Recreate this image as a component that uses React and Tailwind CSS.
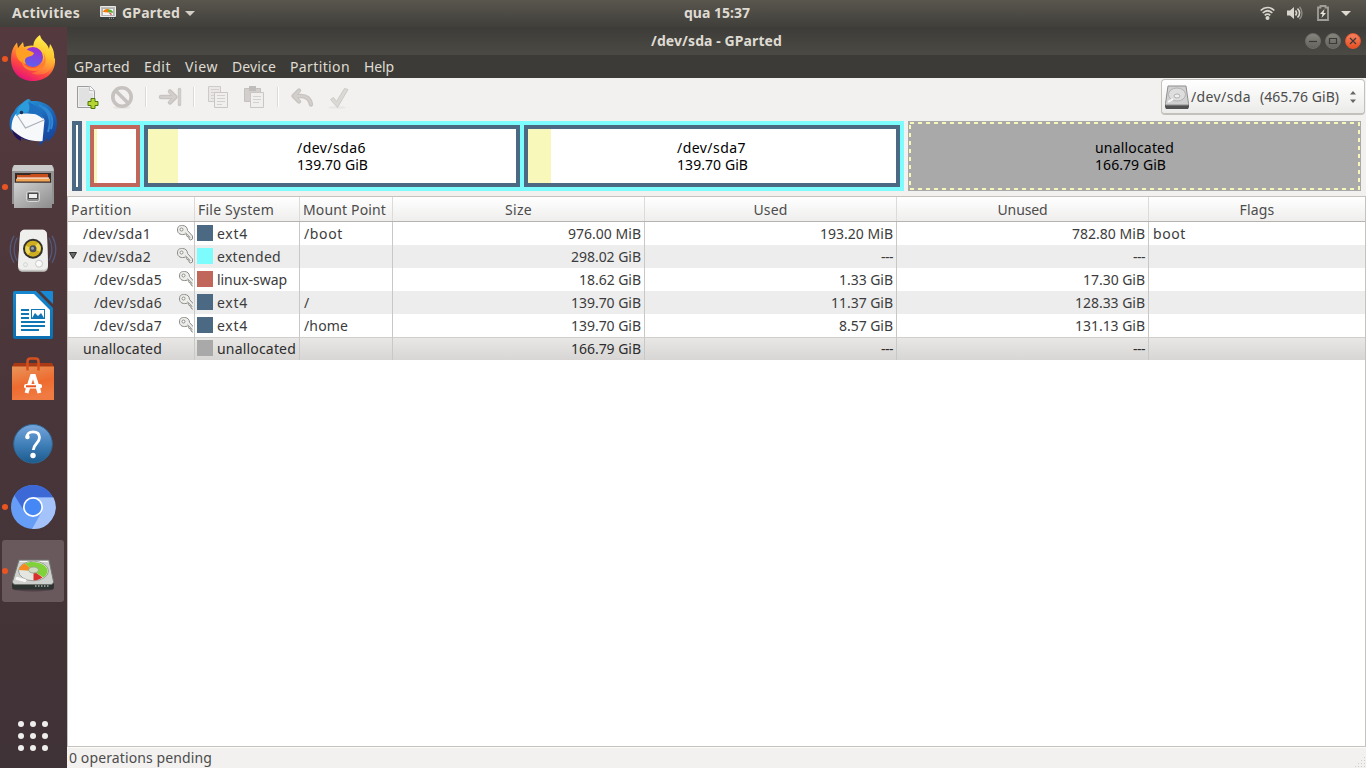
import { useLayoutEffect, useRef } from "react";

// Spreads its text evenly over a given number of pixels.
function Label({ w, className = "", children }) {
  const ref = useRef(null);
  useLayoutEffect(() => {
    const el = ref.current;
    el.style.letterSpacing = "0px";
    const natural = el.getBoundingClientRect().width;
    el.style.letterSpacing = (w - natural) / el.textContent.length + "px";
  }, [w, children]);
  return (
    <span ref={ref} className={"inline-block whitespace-pre " + className}>
      {children}
    </span>
  );
}

function Svg({ className, box, children }) {
  return (
    <svg viewBox={box} className={"block shrink-0 " + className} fill="none">
      {children}
    </svg>
  );
}

function Firefox() {
  return (
    <>
      <defs>
        <linearGradient id="ff1" x1="0.8" y1="0.1" x2="0.3" y2="0.98">
          <stop offset="0" stopColor="#fff44f" />
          <stop offset="0.3" stopColor="#ffa72b" />
          <stop offset="0.65" stopColor="#ff4b3e" />
          <stop offset="1" stopColor="#e5127a" />
        </linearGradient>
        <linearGradient id="ff2" x1="0.6" y1="0" x2="0.4" y2="1">
          <stop offset="0" stopColor="#fff44f" />
          <stop offset="0.5" stopColor="#ffc52f" />
          <stop offset="1" stopColor="#ff6a3c" />
        </linearGradient>
        <linearGradient id="ff3" x1="0.7" y1="0" x2="0.4" y2="1">
          <stop offset="0" stopColor="#a32bd0" />
          <stop offset="1" stopColor="#5a62f0" />
        </linearGradient>
      </defs>
      <path d="M9 31c0-7 2-12 6-16.500l1 5.500 5-6 1 5c5-2 10-2 15 0l11 4 5 8c1 12-8 22-22 22S9 43 9 31Z" fill="url(#ff1)" />
      <path d="M38 7c-5 3.500-7 8-6.500 12 5 1 9 5 10 11 1 9-5 14-12 15 10 4 20 0 22-11 2-8-.5-14-3.500-18l-1 5c-1-6-8-8-9-14Z" fill="url(#ff2)" />
      <circle cx="31" cy="29" r="10" fill="url(#ff3)" />
      <path d="M14 22c2-3 7-3 10-1 3 2 5 2 8 4-1 4-6 3-8 5-2 2-1 4 0 6-6-1-11-7-10-14Z" fill="#ffa024" />
      <path d="M20 32c3 9 13 10 19 5 4-4 4-8 2-13 5 8 3 18-8 19-9 0-14-5-13-11Z" fill="#ff7f30" />
    </>
  );
}

function Thunderbird() {
  return (
    <>
      <defs>
        <linearGradient id="tb1" x1="0.3" y1="0" x2="0.7" y2="1">
          <stop offset="0" stopColor="#2490d6" />
          <stop offset="0.55" stopColor="#1b58ae" />
          <stop offset="1" stopColor="#16439a" />
        </linearGradient>
      </defs>
      <path d="M12 20C15 13 22 9 29 9c14-1 25 7 26 21 0 10-4 16-10 20l1-4-9 8 1-6C24 50 11 45 8 36c-1-6 0-12 4-16Z" fill="url(#tb1)" />
      <path d="M37 13c11 6 13 15 9 27M42 15c8 6 10 13 7 22" stroke="#2f87d2" strokeWidth="2" />
      <path d="M10 36c0 6 4 11 9 13v-3l9 3c-6-3-12-7-18-13Z" fill="#21145a" />
      <path d="M14 22c8-1 16 0 21 0 4 2 7 4 7.500 6l-2 21c-10 1-22-2-31-12 0-6 1-11 4.500-15Z" fill="#f7f8f9" />
      <path d="m15 23 8.500 13 18.500-8" stroke="#a9b0ba" strokeWidth="1.200" />
      <path d="M14 24c1-8 6-14 12-17l3 1-3 2c6 1 10 5 11 13-7-3-15-4-23 1Z" fill="#2c9cdc" />
      <path d="M26 10c8 2 14 9 15 17-4-4-9-6-15-6 2-4 2-8 0-11Z" fill="#1f6fc0" />
      <circle cx="19.500" cy="20.500" r="1.800" fill="#1d3350" />
    </>
  );
}

function Files() {
  return (
    <>
      <defs>
        <linearGradient id="fm1" x1="0" y1="0" x2="1" y2="1">
          <stop offset="0" stopColor="#d0d0d0" />
          <stop offset="1" stopColor="#8c8c8c" />
        </linearGradient>
      </defs>
      <path d="M12 9h38l2 3v36H10V12Z" fill="#929292" />
      <path d="M12 9h38l2 6H10Z" fill="#cacaca" />
      <path d="M13 17h36v12H13Z" fill="#382b26" />
      <path d="M15 19h13l1-1h17v5H15Z" fill="#c9501c" />
      <path d="M15 21.500h32v1.300H15Z" fill="#fff" />
      <path d="M14 22.800h34v2.700H14Z" fill="#f1a252" />
      <path d="M12 26.700h38V52H12Z" fill="url(#fm1)" />
      <rect x="24.500" y="35.500" width="13" height="10" rx="2" fill="#8d8d8d" stroke="#d8d8d8" />
      <rect x="26.500" y="37.500" width="9" height="5" fill="#eee" stroke="#4b4b4b" />
    </>
  );
}

function Speaker() {
  return (
    <g transform="translate(0 1.700)">
      <g stroke="#525a7c" strokeWidth="1.300">
        <path d="M12 14c-5 9-5 18 0 27M50 14c5 9 5 18 0 27M15 16c-4 8-4 15 0 23M47 16c4 8 4 15 0 23" />
      </g>
      <path d="M18 13c0-3 2-5 5-5h17c3 0 5 2 5 5l1 32c0 3-2 5-5 5H21c-3 0-5-2-5-5Z" fill="#c6c6c4" />
      <path d="M18 13c0-3 2-5 5-5h17c3 0 5 2 5 5l1 30c0 3-2 5-5 5H21c-3 0-5-2-5-5Z" fill="#efefed" />
      <circle cx="31" cy="27" r="10" fill="#34332e" />
      <circle cx="31" cy="27" r="8" fill="#cfae20" />
      <path d="m31 27 5-6a8 8 0 0 1 2 9ZM31 27l-5 6a8 8 0 0 1-2-9Z" fill="#ecd654" />
      <circle cx="31" cy="27" r="3.500" fill="#4b4e55" />
      <circle cx="30.500" cy="26.500" r="1.500" fill="#9ca3ae" />
      <circle cx="37" cy="42" r="3.500" fill="#fafafa" stroke="#c9c9c7" />
      <circle cx="23.500" cy="43" r="2" stroke="#d5d5d3" />
    </g>
  );
}

function Writer() {
  return (
    <>
      <defs>
        <linearGradient id="wr1" x1="0" y1="0" x2="0" y2="1">
          <stop offset="0" stopColor="#1687cf" />
          <stop offset="1" stopColor="#0a6fb0" />
        </linearGradient>
      </defs>
      <path d="M11 9a2 2 0 0 1 2-2h21l17 17v29a2 2 0 0 1-2 2H13a2 2 0 0 1-2-2Z" fill="url(#wr1)" />
      <path d="M14 10h18l16 16v26H14Z" fill="#fff" />
      <path d="M38 7h12c1 0 1 1 1 1v12Z" fill="#1789d5" />
      <path d="M19 26h8M19 30h8M19 34h8M19 38h24M19 42h24M19 46h18" stroke="#1177b4" strokeWidth="2" />
      <rect x="29.500" y="25.500" width="13" height="9" stroke="#1177b4" />
      <path d="m30 34 3-5 3 3 3-3 3 5Z" fill="#1177b4" />
    </>
  );
}

function Software() {
  return (
    <g transform="translate(0 3)">
      <defs>
        <linearGradient id="sw1" x1="0" y1="0" x2="0.3" y2="1">
          <stop offset="0" stopColor="#e8955a" />
          <stop offset="0.6" stopColor="#ee6b2f" />
          <stop offset="1" stopColor="#f07b42" />
        </linearGradient>
      </defs>
      <path d="M12 12h38l2 4v3H10v-3Z" fill="#a93a14" />
      <path d="M10 15.500h42V49H10Z" fill="url(#sw1)" />
      <path d="M25.500 19.500v-9c0-2 1-3 3-3h5c2 0 3 1 3 3v9" stroke="#d6501f" strokeWidth="2.500" />
      <path d="m24.500 42 5.500-17h2l5.500 17" stroke="#fff" strokeWidth="4" />
      <rect x="22" y="33" width="18" height="4.500" rx="2" fill="#fff" />
      <path d="M24 35.300h10" stroke="#e95420" strokeWidth="2" />
    </g>
  );
}

function Help() {
  return (
    <>
      <defs>
        <linearGradient id="hp1" x1="0" y1="0" x2="0" y2="1">
          <stop offset="0" stopColor="#76a5dc" />
          <stop offset="0.55" stopColor="#3d7db6" />
          <stop offset="1" stopColor="#1c5b8c" />
        </linearGradient>
      </defs>
      <circle cx="31" cy="31.800" r="19.300" fill="url(#hp1)" stroke="#2f6896" strokeWidth="1" />
      <path d="M25 26c-.5-4.500 2.500-6.200 6-6.200 4 0 6.500 2 6.500 5.700 0 5.500-6.200 6.500-6.200 12.500" stroke="#fff" strokeWidth="2.800" />
      <circle cx="25.500" cy="25" r="2.200" fill="#fff" />
      <circle cx="31" cy="43.500" r="2.700" fill="#fff" />
    </>
  );
}

function Chromium() {
  return (
    <>
      <circle cx="31" cy="31" r="22" fill="#669df6" />
      <path d="M12.500 19.500a22 22 0 0 1 38.500 2H31L21 33Z" fill="#3c69d6" />
      <path d="M51.500 21.500H31l9 14-10 17.500a22 22 0 0 0 21.500-31.500Z" fill="#a4c3fa" />
      <circle cx="31" cy="31" r="10" fill="#fff" />
      <circle cx="31" cy="31" r="8.300" fill="#4587f4" />
    </>
  );
}

function DiskArt() {
  return (
    <g transform="translate(0 -1.500)">
      <ellipse cx="31" cy="50" rx="21" ry="3" fill="#4f4145" />
      <path d="M10 44h42v4c0 2-1 3-3 3H13c-2 0-3-1-3-3Z" fill="#2d3331" />
      <path d="M17 21.500h30L51.500 43c0 2-1 3-3 3h-35c-2 0-3-1-3-3Z" fill="#cdd0cd" stroke="#70766f" />
      <path d="M18 23h28" stroke="#f3f4f3" />
      <ellipse cx="31.500" cy="32.500" rx="15" ry="9.800" fill="#e4e6e2" stroke="#8b9088" strokeWidth="0.800" />
      <path d="M31.500 32.500 23 25c8-4 22.500 0 22.500 7.500 0 3-2 5-4 6.500Z" fill="#7fd338" />
      <path d="M31.500 32.500 23 25c-4 1.500-6 4-6 6.500Z" fill="#f68a1e" />
      <path d="m31.500 32.500 9 6.500c-3 2-6 3-9 3Z" fill="#d9302c" />
      <ellipse cx="31.500" cy="31.500" rx="5" ry="3" fill="#cfdcc2" stroke="#9dab90" />
      <path d="m15 40 8 2" stroke="#f8f8f8" strokeWidth="3" strokeLinecap="round" />
      <path d="M33 47.500h15" stroke="#8a918d" strokeWidth="2" strokeDasharray="1.500 1.500" />
    </g>
  );
}

const dock = [
  [Firefox, true],
  [Thunderbird, false],
  [Files, true],
  [Speaker, false],
  [Writer, false],
  [Software, false],
  [Help, false],
  [Chromium, true],
  [DiskArt, true],
];

function Dock() {
  return (
    <aside className="flex w-[67px] shrink-0 flex-col justify-between bg-linear-to-b from-[#543a3e] to-[#3f3236]">
      <div className="flex flex-col gap-[2px] pt-px pl-[2px]">
        {dock.map(([Icon, running], i) => (
          <div
            key={i}
            className={
              "relative h-[62px] w-[62px] rounded-[3px] " + (i === 8 ? "bg-[#69595d]" : "")
            }
          >
            {running && (
              <span className="absolute top-[28px] left-0 h-[6px] w-[6px] rounded-full bg-[#e95420]" />
            )}
            <Svg box="0 0 62 62" className="h-[62px] w-[62px]">
              <Icon />
            </Svg>
          </div>
        ))}
      </div>
      <div className="mb-[17px] ml-[18px] grid w-[30px] grid-cols-3 gap-[6px]">
        {Array.from({ length: 9 }, (_, i) => (
          <span key={i} className="h-[6px] w-[6px] rounded-full bg-[#eeeeec]" />
        ))}
      </div>
    </aside>
  );
}

function TopBar() {
  return (
    <header className="flex h-[27px] shrink-0 items-center bg-linear-to-b from-[#59564e] to-[#403f3a] font-bold text-[#dfdbd2]">
      <div className="flex w-[600px] items-center pb-px pl-[12px]">
        <Label w={68}>Activities</Label>
        <Svg box="0 0 16 14" className="ml-[20px] h-[14px] w-[16px]">
          <path d="M0 10.500h16V14H0Z" fill="#3b3f3d" />
          <path d="M.5.500h15v10H.5Z" fill="#bdbdbb" stroke="#e8e8e6" />
          <path d="M2.500 2.500h11v7h-11Z" fill="#f4f4f2" stroke="#8a8a88" strokeWidth="0.500" />
          <path d="M3 6c1-3 4-3.500 6-2.500l-1 3Z" fill="#f57900" />
          <path d="M8 3.500c3-.5 5 1 5 3.500L8 6Z" fill="#5cb030" />
          <path d="m8 6 4 2-1 1Z" fill="#cc2222" />
          <path d="M9 12.300h5" stroke="#999" strokeDasharray="1 1" />
        </Svg>
        <Label w={58} className="ml-[6px]">GParted</Label>
        <Svg box="0 0 10 5" className="ml-[5px] h-[5px] w-[10px]">
          <path d="M0 0h10L5 5Z" fill="#d3cfc6" />
        </Svg>
      </div>
      <Label w={66} className="mb-px ml-[84px]">qua 15:37</Label>
      <div className="mb-px ml-auto flex items-center pr-[15px]">
        <Svg box="0 0 15 14" className="h-[14px] w-[15px]">
          <g stroke="#d9d6cf" strokeWidth="1.700">
            <path d="M.7 4.500c4-4 9.600-4 13.600 0M2.700 7c3-2.800 6.600-2.800 9.600 0M4.700 9.300c2-1.600 3.600-1.600 5.600 0" />
          </g>
          <circle cx="7.500" cy="12" r="2" fill="#d9d6cf" />
        </Svg>
        <Svg box="0 0 16 14" className="ml-[12px] h-[14px] w-[16px]">
          <path d="M0 4.500h3L7 1v12L3 9.500H0Z" fill="#d9d6cf" />
          <path d="M8.500 4.500c1.300 1.500 1.300 3.500 0 5M10.500 2.500c2.500 2.700 2.500 6.300 0 9" stroke="#d9d6cf" strokeWidth="1.600" />
          <path d="M12.500.700c3.300 3.700 3.300 8.900 0 12.600" stroke="#8d8a83" strokeWidth="1.400" />
        </Svg>
        <Svg box="0 0 12 16" className="ml-[14px] h-[16px] w-[12px]">
          <path d="M1 2.500h2.500V1h5v1.500H11V15H1Z" stroke="#a19e97" strokeWidth="1.800" />
          <path d="M7.500 4 3 9h2.500L4.500 13 9 8H6.500Z" fill="#e8e5de" />
        </Svg>
        <Svg box="0 0 10 5" className="ml-[12px] h-[5px] w-[10px]">
          <path d="M0 0h10L5 5Z" fill="#dfdbd2" />
        </Svg>
      </div>
    </header>
  );
}

function WindowButton({ close, children }) {
  return (
    <span
      className={
        "flex h-4 w-4 items-center justify-center rounded-full border " +
        (close
          ? "border-[#e0562f] bg-linear-to-b from-[#f5805f] to-[#ea4e1e]"
          : "border-[#6f6e68] bg-linear-to-b from-[#85847d] to-[#64635d]")
      }
    >
      <Svg box="0 0 10 10" className="h-[10px] w-[10px]">
        <g stroke="#3b3a36" strokeWidth="1.200">{children}</g>
      </Svg>
    </span>
  );
}

function TitleBar() {
  return (
    <div className="flex h-[28px] shrink-0 items-center bg-linear-to-b from-[#3d3c38] to-[#4b4a44] font-bold text-[#dfdbd2]">
      <Label w={131} className="ml-[584px]">/dev/sda - GParted</Label>
      <div className="ml-auto flex gap-1 pr-[5px]">
        <WindowButton><path d="M1 5.500h8" /></WindowButton>
        <WindowButton><path d="M1.500 2.500h7v5h-7Z" /></WindowButton>
        <WindowButton close><path d="m2 2 6 6M8 2 2 8" /></WindowButton>
      </div>
    </div>
  );
}

const menus = [
  ["GParted", 56],
  ["Edit", 27],
  ["View", 33],
  ["Device", 44],
  ["Partition", 60],
  ["Help", 30],
];

function ToolIcon({ className = "", children }) {
  return (
    <Svg box="0 0 24 24" className={"h-6 w-6 " + className}>
      {children}
    </Svg>
  );
}

function Separator({ className }) {
  return <span className={"box-content h-[20px] w-px border-r border-white bg-[#dcdad7] " + className} />;
}

function Toolbar() {
  return (
    <div className="flex h-[43px] shrink-0 items-start pl-[8px]">
      <div className="flex h-[38px] items-center">
        <ToolIcon>
          <path d="M2.500 1.500h13l4 4v17h-17Z" fill="#efefef" stroke="#9b9b9b" />
          <path d="M4 3h10v5h4v13H4Z" fill="#e1e1e1" />
          <path d="M13.500 1.500h2l4 4v1c-1-1-3-1-5-1 .5-2 0-3-1-4Z" fill="#fff" stroke="#aaa" strokeWidth="0.800" />
          <path d="M16 13.500h4v3h3v4h-3v3h-4v-3h-3v-4h3Z" fill="#b8d432" stroke="#4b7a0a" />
        </ToolIcon>
        <ToolIcon className="ml-[11px]">
          <ellipse cx="12" cy="22.500" rx="9" ry="1.300" fill="#e6e4e2" />
          <circle cx="12" cy="12" r="9.200" stroke="#c6c2bf" strokeWidth="3.600" />
          <path d="m5.500 5.500 13 13" stroke="#c6c2bf" strokeWidth="3.600" />
        </ToolIcon>
        <Separator className="ml-[11px]" />
        <ToolIcon className="ml-[11px]">
          <path d="M3 12h13M12 6.500l5.500 5.500-5.500 5.500" stroke="#c8c4c1" strokeWidth="4.500" strokeLinecap="round" strokeLinejoin="round" />
          <path d="M21.500 4.500v15" stroke="#c8c4c1" strokeWidth="3.400" strokeLinecap="round" />
          <path d="M3 12h13M12 7l5 5-5 5M21.500 5v14" stroke="#d3cfcc" strokeWidth="2" strokeLinecap="round" />
        </ToolIcon>
        <Separator className="ml-[11px]" />
        <ToolIcon className="ml-[12px]">
          <path d="M1.500 1.500h12v15h-12Z" fill="#eae8e6" stroke="#cdcac7" />
          <path d="M4 4.500h8M4 7.500h8M4 10.500h5M4 13.500h4" stroke="#d3d0cd" />
          <path d="M7.500 7.500h13v15h-13Z" fill="#f0efed" stroke="#c9c6c3" />
          <path d="M10 10.500h8M10 13.500h8M10 16.500h8M10 19.500h5" stroke="#d3d0cd" />
        </ToolIcon>
        <ToolIcon className="ml-[12px]">
          <path d="M1.500 3.500h16v13h-16Z" fill="#d1cecb" stroke="#c3c0bd" />
          <path d="M6 1h7v5H6Z" fill="#bfbcb9" />
          <path d="M7.500 7.500h13v15h-13Z" fill="#f0efed" stroke="#c9c6c3" />
          <path d="M10 11.500h8M10 14.500h8M10 17.500h6" stroke="#d3d0cd" />
        </ToolIcon>
        <Separator className="ml-[10px]" />
        <ToolIcon className="ml-[11px]">
          <path d="M9 5.500 3.500 11 9 16.500M4.500 11H11c6 0 9 3 10 8.500" stroke="#c8c4c1" strokeWidth="4.400" strokeLinecap="round" strokeLinejoin="round" />
          <path d="M9 6 4 11l5 5M4.500 11H11c6 0 9 3 10 8" stroke="#d3cfcc" strokeWidth="2" strokeLinecap="round" />
        </ToolIcon>
        <ToolIcon className="ml-[12px]">
          <ellipse cx="11" cy="22.500" rx="9" ry="1.300" fill="#e9e7e5" />
          <path d="m4.500 14.500 3-2 3 4 8-13 3.500 1-10.500 18Z" fill="#dad9d4" stroke="#cdcbc7" strokeLinejoin="round" />
        </ToolIcon>
      </div>
      <div className="mt-px mr-px ml-auto flex h-9 w-[204px] items-center rounded-[4px] border border-b-2 border-[#c4c1bd] bg-linear-to-b from-white to-[#ebebe9] pl-[3px] text-[#4c4c4c]">
        <Svg box="0 0 24 24" className="h-6 w-6">
          <path d="M0 19h24v3l-1 2H1l-1-2Z" fill="#515151" />
          <path d="M3 1h18l2.500 17.500v1.500H.5v-1.500Z" fill="#d0d0d0" stroke="#8f8f8f" />
          <ellipse cx="12" cy="9.500" rx="8.500" ry="6.500" fill="#dedede" stroke="#b3b3b3" />
          <ellipse cx="12" cy="11" rx="3" ry="2" fill="#f0f0f0" stroke="#b1b1b1" />
          <path d="m3 17 5-3" stroke="#f8f8f8" strokeWidth="2" />
        </Svg>
        <Label w={60} className="ml-[2px]">/dev/sda</Label>
        <Label w={79} className="ml-[9px]">(465.76 GiB)</Label>
        <Svg box="0 0 6 14" className="ml-[11px] h-[14px] w-[6px]">
          <path d="M0 4.500 3 1l3 3.500ZM0 9.500 3 13l3-3.500Z" fill="#666" />
        </Svg>
      </div>
    </div>
  );
}

function Block({ className, used, name, size, nameW, sizeW }) {
  return (
    <div className={"flex border-4 bg-white " + className}>
      <span className={"shrink-0 bg-[#f8f8ba] " + used} />
      {name && (
        <span className="-ml-[var(--u)] flex grow flex-col items-center justify-center text-black">
          <span className="flex flex-col pl-px leading-[17px]">
            <Label w={nameW} className="self-start">{name}</Label>
            <Label w={sizeW} className="self-start">{size}</Label>
          </span>
        </span>
      )}
    </div>
  );
}

function Diagram() {
  return (
    <div className="flex h-[70px] shrink-0 gap-1 pl-[5px]">
      <div className="w-[10px] border-4 border-[#4b6983] bg-white" />
      <div className="flex w-[818px] gap-1 border-4 border-[#7dfcfe] bg-[#7dfcfe]">
        <Block className="w-[50px] border-[#c1665a]" used="w-[3px]" />
        <Block
          className="w-[376px] border-[#4b6983] [--u:30px]"
          used="w-[30px]"
          name="/dev/sda6"
          size="139.70 GiB"
          nameW={69}
          sizeW={71}
        />
        <Block
          className="w-[376px] border-[#4b6983] [--u:23px]"
          used="w-[23px]"
          name="/dev/sda7"
          size="139.70 GiB"
          nameW={69}
          sizeW={71}
        />
      </div>
      <div className="relative flex w-[453px] items-center justify-center bg-[#a9a9a9] text-black">
        <svg className="absolute inset-0 h-full w-full" viewBox="0 0 453 70" fill="none">
          <path d="M2 2h449v66H2Z" stroke="#f8f8ba" strokeWidth="2" strokeDasharray="4 4" />
        </svg>
        <span className="flex flex-col leading-[17px]">
          <Label w={79} className="self-start">unallocated</Label>
          <Label w={71} className="self-start">166.79 GiB</Label>
        </span>
      </div>
    </div>
  );
}

function Key({ nested }) {
  return (
    <Svg
      box={nested ? "0 0 14 16" : "0 0 16 16"}
      className={"mt-[3px] mr-px ml-auto h-4 self-start " + (nested ? "w-[14px]" : "w-4")}
    >
      <g stroke="#8b8b87">
        <path d="M5.500.500c3 0 5 2 5 5l5 5.500v3l-2 1-1.500-1v-2l-2-.5-.500-2-1-.5c-4 1.500-8 0-8-4s2-4.500 5-4.500Z" fill="#ededeb" />
        <circle cx="4.500" cy="4.500" r="1.500" fill="#fff" />
        <path d="m8.500 7.500 5 5" strokeWidth="0.700" />
      </g>
    </Svg>
  );
}

const columns = [
  "w-[127px] pl-[3px]",
  "w-[105px] pl-[3px]",
  "w-[93px] pl-[3px]",
  "w-[252px] justify-center",
  "w-[252px] justify-center",
  "w-[252px] justify-center",
  "w-[216px] justify-center",
];
const headings = [
  ["Partition", 61],
  ["File System", 76],
  ["Mount Point", 83],
  ["Size", 27],
  ["Used", 34],
  ["Unused", 50],
  ["Flags", 35],
];

const rows = [
  { name: "/dev/sda1", nw: 68, color: "bg-[#4b6983]", fs: "ext4", fw: 31, mount: "/boot", mw: 39, size: "976.00 MiB", used: "193.20 MiB", unused: "782.80 MiB", flags: "boot", key: true },
  { name: "/dev/sda2", nw: 68, color: "bg-[#7dfcfe]", fs: "extended", fw: 64, size: "298.02 GiB", used: "---", unused: "---", key: true, open: true },
  { name: "/dev/sda5", nw: 68, nested: true, color: "bg-[#c1665a]", fs: "linux-swap", fw: 70, size: "18.62 GiB", used: "1.33 GiB", unused: "17.30 GiB", key: true },
  { name: "/dev/sda6", nw: 68, nested: true, color: "bg-[#4b6983]", fs: "ext4", fw: 31, mount: "/", mw: 6, size: "139.70 GiB", used: "11.37 GiB", unused: "128.33 GiB", key: true },
  { name: "/dev/sda7", nw: 68, nested: true, color: "bg-[#4b6983]", fs: "ext4", fw: 31, mount: "/home", mw: 44, size: "139.70 GiB", used: "8.57 GiB", unused: "131.13 GiB", key: true },
  { name: "unallocated", nw: 79, color: "bg-[#a9a9a9]", fs: "unallocated", fw: 79, size: "166.79 GiB", used: "---", unused: "---", selected: true },
];

const amountWidths = { 3: 12, 8: 54, 9: 62, 10: 70 };
const amountWidth = (s) => (s.includes("MiB") ? 73 : amountWidths[s.length]);

function Amount({ children }) {
  return (
    <div className="flex w-[252px] items-center justify-end border-r border-[#c8c8c6] pr-[3px]">
      <Label w={amountWidth(children)}>{children}</Label>
    </div>
  );
}

function Row({ row, index }) {
  const bg = row.selected
    ? "bg-linear-to-b from-[#e9e8e7] to-[#d8d6d4] shadow-[inset_0_1px_0_#d0cfcd] text-[#2d2d2d]"
    : index % 2
      ? "bg-[#ededed]"
      : "bg-white";
  return (
    <div className={"flex h-[23px] " + bg}>
      <div className="flex w-[127px] items-center border-r border-[#c8c8c6]">
        <span className="flex w-[15px] shrink-0 self-start pt-[7px] pl-px">
          {row.open && (
            <Svg box="0 0 8 7" className="h-[7px] w-[8px]">
              <path d="M.5.500h7L4 6.500Z" fill="#6b6b6b" stroke="#2e2e2e" />
            </Svg>
          )}
        </span>
        <Label w={row.nw} className={row.nested ? "ml-[11px]" : ""}>{row.name}</Label>
        {row.key && <Key nested={row.nested} />}
      </div>
      <div className="flex w-[105px] items-center border-r border-[#c8c8c6] pl-[2px]">
        <span className={"mb-px h-4 w-4 " + row.color} />
        <Label w={row.fw} className="ml-[4px]">{row.fs}</Label>
      </div>
      <div className="flex w-[93px] items-center border-r border-[#c8c8c6] pl-[4px]">
        {row.mount && <Label w={row.mw}>{row.mount}</Label>}
      </div>
      <Amount>{row.size}</Amount>
      <Amount>{row.used}</Amount>
      <Amount>{row.unused}</Amount>
      <div className="flex w-[216px] items-center pl-[4px]">
        {row.flags && <Label w={33}>{row.flags}</Label>}
      </div>
    </div>
  );
}

function PartitionTable() {
  return (
    <div className="mt-[5px] grow border border-[#c6c3bf] bg-white text-[#3c3c3c]">
      <div className="flex h-[25px] border-b border-[#b5b3b0] bg-linear-to-b from-white to-[#efeeed] text-[#4c4c4c]">
        {headings.map(([text, w], i) => (
          <div
            key={text}
            className={
              "flex items-center pt-[2px] " + columns[i] + (i < 6 ? " border-r border-[#dddbd8]" : "")
            }
          >
            <Label w={w}>{text}</Label>
          </div>
        ))}
      </div>
      {rows.map((row, i) => (
        <Row key={row.name} row={row} index={i} />
      ))}
    </div>
  );
}

export default function App() {
  return (
    <div className="flex h-[768px] w-[1366px] flex-col overflow-hidden bg-[#f2f1f0] font-['Noto_Sans','Open_Sans',sans-serif] text-[14px] leading-[18px]">
      <TopBar />
      <div className="flex min-h-0 grow">
        <Dock />
        <main className="flex min-w-0 grow flex-col">
          <TitleBar />
          <nav className="flex h-[23px] shrink-0 items-center gap-[14px] bg-[#3c3b37] pl-[7px] text-[#dfdbd2]">
            {menus.map(([text, w]) => (
              <Label key={text} w={w}>{text}</Label>
            ))}
          </nav>
          <Toolbar />
          <Diagram />
          <PartitionTable />
          <footer className="flex h-[21px] shrink-0 items-center justify-between border-t border-[#fbfbfa] pl-[2px] text-[#4c4c4c]">
            <Label w={143} className="mb-px">0 operations pending</Label>
            <Svg box="0 0 12 12" className="h-[12px] w-[12px] self-end">
              <path d="M1 10.500h11M4 7.500h8M7 4.500h5M10 1.500h2" stroke="#d0cdc9" strokeDasharray="1 2" />
            </Svg>
          </footer>
        </main>
      </div>
    </div>
  );
}
